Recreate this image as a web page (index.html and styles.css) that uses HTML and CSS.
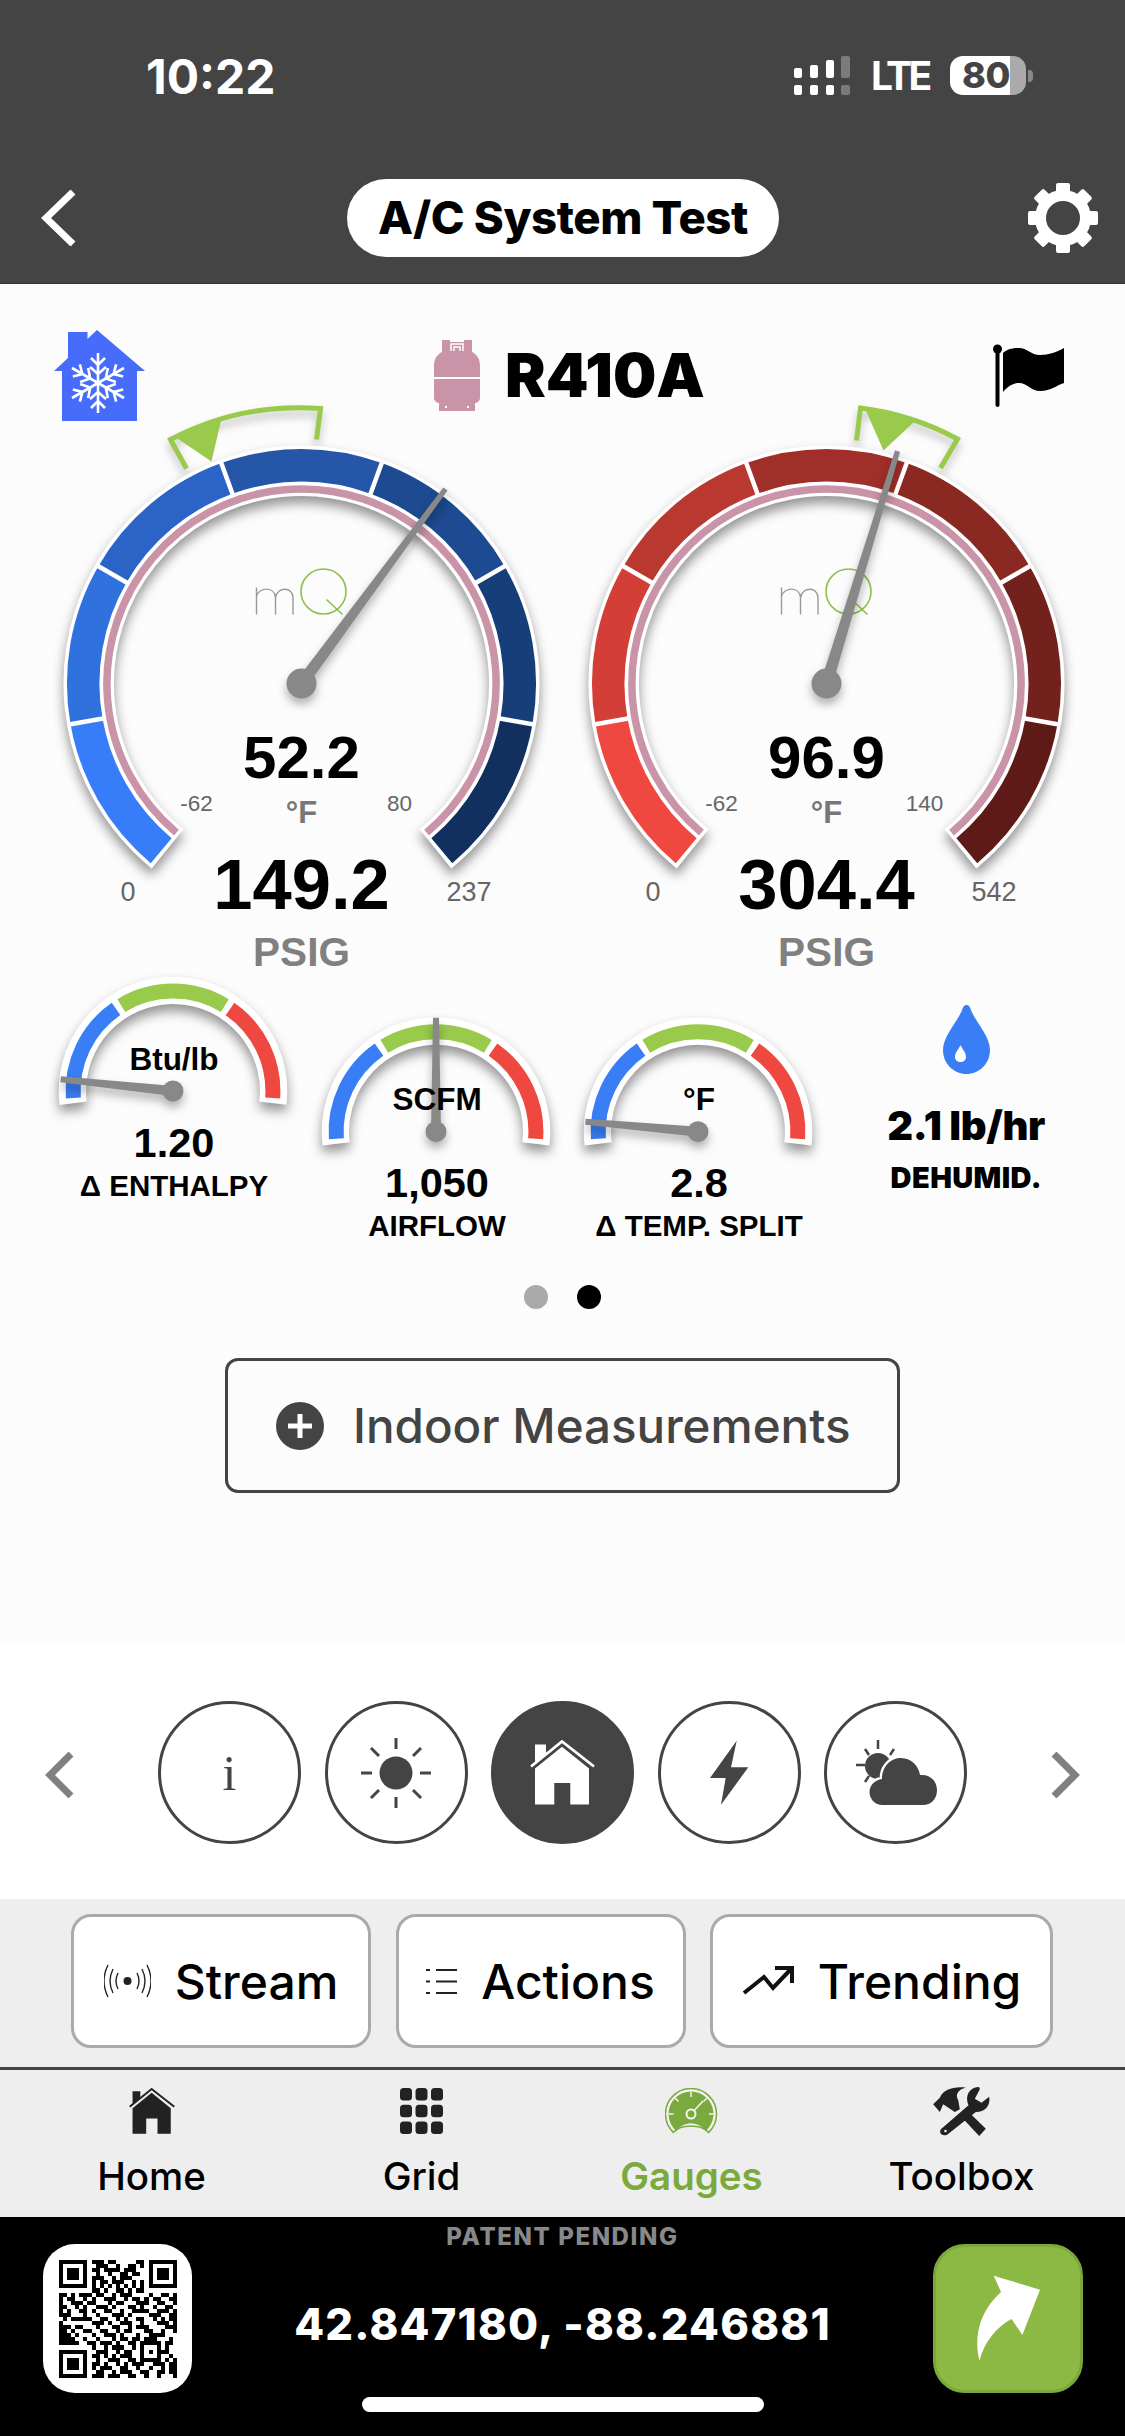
FILE: index.html
```html
<!DOCTYPE html>
<html lang="en">
<head>
<meta charset="utf-8">
<title>A/C System Test</title>
<link rel="stylesheet" href="styles.css">
</head>
<body>
<div class="screen">
  <header class="top">
    <div class="status">
      <span class="time">10:22</span>
      <div class="status-right">
        <svg class="signal" viewBox="0 0 56 39"><g fill="#fff"><rect x="0" y="12" width="8" height="10" rx="2"/><rect x="0" y="29" width="8" height="10" rx="2"/><rect x="16" y="9" width="8" height="13" rx="2"/><rect x="16" y="29" width="8" height="10" rx="2"/><rect x="32" y="4" width="8" height="18" rx="2"/><rect x="32" y="29" width="8" height="10" rx="2"/></g><g fill="#7b7b7b"><rect x="47" y="0" width="9" height="22" rx="2"/><rect x="47" y="29" width="9" height="10" rx="2"/></g></svg>
        <span class="lte">LTE</span>
        <span class="battery">80</span>
        <span class="nub"></span>
      </div>
    </div>
    <nav class="nav">
      <svg class="back" viewBox="0 0 36 56"><polyline points="32,2 5,28 32,54" fill="none" stroke="#fff" stroke-width="7"/></svg>
      <h1 class="title">A/C System Test</h1>
      <svg class="gear" viewBox="-35 -35 70 70"><circle r="22.5" fill="none" stroke="#fff" stroke-width="11"/><g fill="#fff"><rect x="-7" y="-35" width="14" height="12" rx="2"/><rect x="-7" y="-35" width="14" height="12" rx="2" transform="rotate(45)"/><rect x="-7" y="-35" width="14" height="12" rx="2" transform="rotate(90)"/><rect x="-7" y="-35" width="14" height="12" rx="2" transform="rotate(135)"/><rect x="-7" y="-35" width="14" height="12" rx="2" transform="rotate(180)"/><rect x="-7" y="-35" width="14" height="12" rx="2" transform="rotate(225)"/><rect x="-7" y="-35" width="14" height="12" rx="2" transform="rotate(270)"/><rect x="-7" y="-35" width="14" height="12" rx="2" transform="rotate(315)"/></g></svg>
    </nav>
  </header>

  <main class="content">
    <div class="heading">
      <svg class="house" viewBox="54 329 91 92">
        <path fill="#476bfb" d="M68 332H87.5V339L97 330L145 371H137V421H62V371H54L68 358Z"/>
        <g transform="translate(98 383)" fill="none" stroke="#fff" stroke-width="2.6">
          <g id="arm"><path d="M0 0V-30M-7 -25L0 -18L7 -25M-8 -16L0 -9L8 -16"/></g>
          <use href="#arm" transform="rotate(60)"/><use href="#arm" transform="rotate(120)"/><use href="#arm" transform="rotate(180)"/><use href="#arm" transform="rotate(240)"/><use href="#arm" transform="rotate(300)"/>
        </g>
      </svg>
      <div class="refrigerant">
        <svg class="cylinder" viewBox="0 0 46 71">
          <path fill="#c993a8" d="M8 0H16V2H30V0H38V12C42 14 46 18 46 26V58C46 60 44 63 41 63V71H5V63C2 63 0 60 0 58V26C0 18 4 14 8 12Z"/>
          <path fill="none" stroke="#fff" stroke-width="1.5" d="M17 11V4H29V11M20 11V7H26V11"/>
          <rect x="0" y="37" width="46" height="2" fill="#fff"/>
          <rect x="11" y="66" width="2" height="2" fill="#fff"/><rect x="33" y="66" width="2" height="2" fill="#fff"/>
        </svg>
        <span class="refrigerant-name">R410A</span>
      </div>
      <svg class="flag" viewBox="0 0 72 64">
        <rect x="2.5" y="4" width="4" height="60" rx="2"/><circle cx="4.5" cy="6" r="4.5"/>
        <path d="M10 10C14 6 20 5 26 5C34 5 38 12 47 12C56 12 64 9 71 5V40C64 42 58 48 47 48C38 48 34 40 26 40C20 40 14 44 10 49Z"/>
      </svg>
    </div>

    <div class="gauges">
      <svg class="gauge" viewBox="-262.5 -288.5 525 580">
        <path class="bracket" d="M15 -244L19 -275A277 277 0 0 0 -131 -244L-115 -215"/>
        <path class="bracket-mark" d="M-80 -265A277 277 0 0 0 -127 -247L-90 -222Z"/>
        <g class="shadow">
          <circle class="dial-base" r="212.8" pathLength="360" stroke-dasharray="282 78" transform="rotate(-231)"/>
          <circle class="seg" r="218.3" stroke="#377dfa" pathLength="360" stroke-dasharray="40 320" transform="rotate(-230)"/>
          <circle class="seg" r="218.3" stroke="#2f71dd" pathLength="360" stroke-dasharray="40 320" transform="rotate(-190)"/>
          <circle class="seg" r="218.3" stroke="#2b64c6" pathLength="360" stroke-dasharray="40 320" transform="rotate(-150)"/>
          <circle class="seg" r="218.3" stroke="#2556a7" pathLength="360" stroke-dasharray="40 320" transform="rotate(-110)"/>
          <circle class="seg" r="218.3" stroke="#1d4a90" pathLength="360" stroke-dasharray="40 320" transform="rotate(-70)"/>
          <circle class="seg" r="218.3" stroke="#163e78" pathLength="360" stroke-dasharray="40 320" transform="rotate(-30)"/>
          <circle class="seg" r="218.3" stroke="#12305f" pathLength="360" stroke-dasharray="40 320" transform="rotate(10)"/>
          <path class="dividers" d="M-68.4 -188L-80.7 -221.800M68.4 -188L80.7 -221.800M-173.200 -100L-204.400 -118M173.200 -100L204.400 -118M-197 34.700L-232.400 41M197 34.700L232.400 41"/>
          <circle class="rim" r="194.6" pathLength="360" stroke-dasharray="280 80" transform="rotate(-230)"/>
        </g>
        <path class="logo-m" d="M-45 -69V-96M-45 -87C-42 -97 -27 -97 -26 -86V-69M-26 -86C-24 -97 -9 -97 -8.5 -86V-69"/>
        <g class="logo-q"><circle cx="22" cy="-92" r="22.5"/><path d="M25 -84L41 -69"/></g>
        <g class="shadow-soft">
          <polygon class="needle" points="-6,0 6,0 2.6,-242 -2.6,-242" transform="rotate(36.5)"/>
          <circle class="needle" r="15"/>
        </g>
        <text class="g-value" y="94">52.2</text>
        <text class="g-unit" y="139">°F</text>
        <text class="g-small" x="-105" y="127">-62</text>
        <text class="g-small" x="98" y="127">80</text>
        <text class="g-main" y="225.6">149.2</text>
        <text class="g-end" x="-173.4" y="217.5">0</text>
        <text class="g-end" x="167.5" y="217.5">237</text>
        <text class="g-label" y="282">PSIG</text>
      </svg>
      <svg class="gauge" viewBox="-262.5 -288.5 525 580">
        <path class="bracket" d="M30 -243L34 -275.5A277 277 0 0 1 131 -244.5L114 -215.5"/>
        <path class="bracket-mark" d="M39 -274A277 277 0 0 1 88 -262L57 -233Z"/>
        <g class="shadow">
          <circle class="dial-base" r="212.8" pathLength="360" stroke-dasharray="282 78" transform="rotate(-231)"/>
          <circle class="seg" r="218.3" stroke="#ee4840" pathLength="360" stroke-dasharray="40 320" transform="rotate(-230)"/>
          <circle class="seg" r="218.3" stroke="#d33f36" pathLength="360" stroke-dasharray="40 320" transform="rotate(-190)"/>
          <circle class="seg" r="218.3" stroke="#b93830" pathLength="360" stroke-dasharray="40 320" transform="rotate(-150)"/>
          <circle class="seg" r="218.3" stroke="#a02f2a" pathLength="360" stroke-dasharray="40 320" transform="rotate(-110)"/>
          <circle class="seg" r="218.3" stroke="#8a2822" pathLength="360" stroke-dasharray="40 320" transform="rotate(-70)"/>
          <circle class="seg" r="218.3" stroke="#72211c" pathLength="360" stroke-dasharray="40 320" transform="rotate(-30)"/>
          <circle class="seg" r="218.3" stroke="#5e1a16" pathLength="360" stroke-dasharray="40 320" transform="rotate(10)"/>
          <path class="dividers" d="M-68.4 -188L-80.7 -221.800M68.4 -188L80.7 -221.800M-173.200 -100L-204.400 -118M173.200 -100L204.400 -118M-197 34.700L-232.400 41M197 34.700L232.400 41"/>
          <circle class="rim" r="194.6" pathLength="360" stroke-dasharray="280 80" transform="rotate(-230)"/>
        </g>
        <path class="logo-m" d="M-45 -69V-96M-45 -87C-42 -97 -27 -97 -26 -86V-69M-26 -86C-24 -97 -9 -97 -8.5 -86V-69"/>
        <g class="logo-q"><circle cx="22" cy="-92" r="22.5"/><path d="M25 -84L41 -69"/></g>
        <g class="shadow-soft">
          <polygon class="needle" points="-6,0 6,0 2.6,-243 -2.6,-243" transform="rotate(17)"/>
          <circle class="needle" r="15"/>
        </g>
        <text class="g-value" y="94">96.9</text>
        <text class="g-unit" y="139">°F</text>
        <text class="g-small" x="-105" y="127">-62</text>
        <text class="g-small" x="98" y="127">140</text>
        <text class="g-main" y="225.6">304.4</text>
        <text class="g-end" x="-173.4" y="217.5">0</text>
        <text class="g-end" x="167.5" y="217.5">542</text>
        <text class="g-label" y="282">PSIG</text>
      </svg>
    </div>

    <div class="minis">
      <svg class="mini" viewBox="-131 -116 262.5 275">
        <g class="shadow-mini">
          <circle class="mini-base" r="100.6" pathLength="360" stroke-dasharray="194 166" transform="rotate(-187)"/>
          <circle class="mini-seg" r="99.9" stroke="#3a7ef5" pathLength="360" stroke-dasharray="59.2 300.8" transform="rotate(-184)"/>
          <circle class="mini-seg" r="99.9" stroke="#9aca4c" pathLength="360" stroke-dasharray="62.4 297.6" transform="rotate(-121.2)"/>
          <circle class="mini-seg" r="99.9" stroke="#ee4840" pathLength="360" stroke-dasharray="59.2 300.8" transform="rotate(-55.2)"/>
        </g>
        <g class="shadow-soft">
          <polygon class="needle" points="-5,0 5,0 3,-113 -3,-113" transform="rotate(-84)"/>
          <circle class="needle" r="10.5"/>
        </g>
        <text class="m-unit" x="1" y="-21">Btu/lb</text>
        <text class="m-value" x="1" y="65.5">1.20</text>
        <text class="m-label" x="1" y="105">Δ ENTHALPY</text>
      </svg>
      <svg class="mini" viewBox="-131 -156.7 262.5 275">
        <g class="shadow-mini">
          <circle class="mini-base" r="100.6" pathLength="360" stroke-dasharray="194 166" transform="rotate(-187)"/>
          <circle class="mini-seg" r="99.9" stroke="#3a7ef5" pathLength="360" stroke-dasharray="59.2 300.8" transform="rotate(-184)"/>
          <circle class="mini-seg" r="99.9" stroke="#9aca4c" pathLength="360" stroke-dasharray="62.4 297.6" transform="rotate(-121.2)"/>
          <circle class="mini-seg" r="99.9" stroke="#ee4840" pathLength="360" stroke-dasharray="59.2 300.8" transform="rotate(-55.2)"/>
        </g>
        <g class="shadow-soft">
          <polygon class="needle" points="-5,0 5,0 3,-114 -3,-114"/>
          <circle class="needle" r="10.5"/>
        </g>
        <text class="m-unit" x="1" y="-21.7">SCFM</text>
        <text class="m-value" x="1" y="65">1,050</text>
        <text class="m-label" x="1" y="104.3">AIRFLOW</text>
      </svg>
      <svg class="mini" viewBox="-131 -156.7 262.5 275">
        <g class="shadow-mini">
          <circle class="mini-base" r="100.6" pathLength="360" stroke-dasharray="194 166" transform="rotate(-187)"/>
          <circle class="mini-seg" r="99.9" stroke="#3a7ef5" pathLength="360" stroke-dasharray="59.2 300.8" transform="rotate(-184)"/>
          <circle class="mini-seg" r="99.9" stroke="#9aca4c" pathLength="360" stroke-dasharray="62.4 297.6" transform="rotate(-121.2)"/>
          <circle class="mini-seg" r="99.9" stroke="#ee4840" pathLength="360" stroke-dasharray="59.2 300.8" transform="rotate(-55.2)"/>
        </g>
        <g class="shadow-soft">
          <polygon class="needle" points="-5,0 5,0 3,-113 -3,-113" transform="rotate(-85)"/>
          <circle class="needle" r="10.5"/>
        </g>
        <text class="m-unit" x="1" y="-21.7">°F</text>
        <text class="m-value" x="1" y="65">2.8</text>
        <text class="m-label" x="1" y="104.3">Δ TEMP. SPLIT</text>
      </svg>
      <div class="dehumid">
        <svg class="drop" viewBox="0 0 47 69"><path fill="#3a7ef5" d="M23.5 0C26 0 27 2 28 5C32 16 47 31 47 45C47 59 36 69 23.5 69C11 69 0 59 0 45C0 31 15 16 19 5C20 2 21 0 23.5 0Z"/><path fill="#fff" d="M17.5 40C19 44 23 47 23 52C23 55 20.500 57 17.500 57C14.500 57 12 55 12 52C12 47 16 44 17.500 40Z"/></svg>
        <span class="dehumid-value">2.1 lb/hr</span>
        <span class="dehumid-label">DEHUMID.</span>
      </div>
    </div>

    <div class="pager"><span class="dot"></span><span class="dot dot-on"></span></div>

    <button class="indoor" type="button">
      <svg class="plus" viewBox="0 0 48 48"><circle cx="24" cy="24" r="24" fill="#444"/><path d="M24 12V36M12 24H36" stroke="#fff" stroke-width="5"/></svg>
      <span>Indoor Measurements</span>
    </button>
  </main>

  <section class="carousel">
    <svg class="chev" viewBox="0 0 29 46"><polyline points="26,2 5,23 26,44" fill="none" stroke="#808080" stroke-width="7"/></svg>
    <div class="round"><span class="info">i</span></div>
    <div class="round">
      <svg class="ico-sun" viewBox="-36 -36 72 72"><circle r="16.500" fill="#444"/><path d="M0 -24V-35M0 24V35M-24 0H-35M24 0H35M-17 -17L-25 -25M17 -17L25 -25M-17 17L-25 25M17 17L25 25" stroke="#444" stroke-width="3"/></svg>
    </div>
    <div class="round round-on">
      <svg class="ico-home" viewBox="0 0 65 65"><path fill="#fff" d="M5 28.500L32 6.800L59 28.500V64.500H40.300V43H24.300V64.500H5Z"/><path fill="#fff" d="M5 4.500H16V14L5 23Z"/><polyline points="1,26.500 32,1.500 64,26.500" fill="none" stroke="#fff" stroke-width="2.800"/></svg>
    </div>
    <div class="round">
      <svg class="ico-bolt" viewBox="0 0 39 65"><polygon fill="#444" points="26.700,0.700 0,38 15.700,38 11,64.700 38.300,27.300 21,27.300"/></svg>
    </div>
    <div class="round">
      <svg class="ico-cloud" viewBox="853 1740 84 67"><circle cx="877" cy="1767" r="13" fill="#444"/><path d="M877 1741V1750M855 1766H864M864 1750L868 1756M893 1750L889 1756M864 1783L868 1777" stroke="#444" stroke-width="2.500"/><path fill="#444" stroke="#fff" stroke-width="5" paint-order="stroke" d="M882 1806C872 1806 868.500 1798 868.500 1793C868.500 1786 874 1781 881 1780C881 1767 890 1759 900 1759C911 1759 918 1768 919 1776C929 1775 936 1782 936 1791C936 1800 930 1806 922 1806Z"/></svg>
    </div>
    <svg class="chev" viewBox="0 0 29 46"><polyline points="3,2 24,23 3,44" fill="none" stroke="#808080" stroke-width="7"/></svg>
  </section>

  <section class="actions">
    <button class="action action-stream" type="button">
      <svg class="ico-stream" viewBox="0 0 47 34"><circle cx="23.500" cy="17" r="4" fill="#222"/><path d="M33 9Q37 17 33 25M38 5Q44 17 38 29M43 1Q51 17 43 33M14 9Q10 17 14 25M9 5Q3 17 9 29M4 1Q-4 17 4 33" fill="none" stroke="#222" stroke-width="1.400"/></svg>
      <span>Stream</span>
    </button>
    <button class="action action-list" type="button">
      <svg class="ico-list" viewBox="0 0 31 27"><path d="M0 2H4M10 2H31M0 13.500H4M10 13.500H31M0 25H4M10 25H31" stroke="#222" stroke-width="2"/></svg>
      <span>Actions</span>
    </button>
    <button class="action action-trend" type="button">
      <svg class="ico-trend" viewBox="0 0 52 30"><path d="M2 27L22 11L31 22L49 3M33 2H50V17" fill="none" stroke="#111" stroke-width="4"/></svg>
      <span>Trending</span>
    </button>
  </section>

  <nav class="tabs">
    <div class="tab">
      <span class="tab-icon"><svg class="tab-home" viewBox="0 0 65 65"><path fill="#222" d="M5 28.500L32 6.800L59 28.500V64.500H40.300V43H24.300V64.500H5Z"/><path fill="#222" d="M5 4.500H16V14L5 23Z"/><polyline points="1,26.500 32,1.500 64,26.500" fill="none" stroke="#222" stroke-width="2.800"/></svg></span>
      <span class="tab-label">Home</span>
    </div>
    <div class="tab">
      <span class="tab-icon"><svg class="tab-grid" viewBox="0 0 43 46"><g fill="#222"><rect width="12" height="12.500" rx="3.500"/><rect x="15.500" width="12" height="12.500" rx="3.500"/><rect x="31" width="12" height="12.500" rx="3.500"/><rect y="16.700" width="12" height="12.500" rx="3.500"/><rect x="15.500" y="16.700" width="12" height="12.500" rx="3.500"/><rect x="31" y="16.700" width="12" height="12.500" rx="3.500"/><rect y="33.500" width="12" height="12.500" rx="3.500"/><rect x="15.500" y="33.500" width="12" height="12.500" rx="3.500"/><rect x="31" y="33.500" width="12" height="12.500" rx="3.500"/></g></svg></span>
      <span class="tab-label">Grid</span>
    </div>
    <div class="tab">
      <span class="tab-icon"><svg class="tab-gauge" viewBox="0 0 53 46"><path fill="#f4f4f4" stroke="#7aaa3e" stroke-width="1.500" d="M8.300 44.400A25.500 25.500 0 1 1 43.700 44.400C36 36 16 36 8.300 44.400Z"/><path fill="#7aaa3e" d="M11.500 43.200A22.500 22.500 0 1 1 40.500 43.200C34 33 18 33 11.500 43.200Z"/><path d="M26 4V9M10 10L13.500 13.500M42 10L38.500 13.500M3.500 26H8.500M44 26H48.500M26 26L38 13" fill="none" stroke="#f4f4f4" stroke-width="1.500"/><circle cx="26" cy="26" r="4.500" fill="#7aaa3e" stroke="#f4f4f4" stroke-width="2"/></svg></span>
      <span class="tab-label tab-label-on">Gauges</span>
    </div>
    <div class="tab">
      <span class="tab-icon"><svg class="tab-tool" viewBox="880 30 170 150"><g fill="#222"><path d="M960 118L978 100L1038 158L1018 180Z"/><path d="M880 85L900 65C910 40 945 30 978 35C955 40 945 55 955 72L960 100L945 108L910 85L900 108Z"/><path d="M1018 33C985 33 975 65 986 88L903 160C896 172 908 182 922 176L1008 108C1040 108 1052 85 1048 62L1025 80L1005 68L1020 40Z"/></g><circle cx="917" cy="165" r="4" fill="#eee"/></svg></span>
      <span class="tab-label">Toolbox</span>
    </div>
  </nav>

  <footer class="foot">
    <div class="patent">PATENT PENDING</div>
    <div class="foot-row">
      <div class="qr">
        <svg class="qr-code" viewBox="0 0 29 29" shape-rendering="crispEdges"><path fill="none" stroke="#000" stroke-width="1" d="M0 .5h7M8 .5h3M12 .5h2M19 .5h2M22 .5h7M0 1.500h1M6 1.500h1M9 1.500h3M14 1.500h1M17 1.500h2M20 1.500h1M22 1.500h1M28 1.500h1M0 2.500h1M2 2.500h3M6 2.500h1M8 2.500h2M11 2.500h4M16 2.500h3M22 2.500h1M24 2.500h3M28 2.500h1M0 3.500h1M2 3.500h3M6 3.500h1M9 3.500h1M12 3.500h1M15 3.500h2M18 3.500h2M22 3.500h1M24 3.500h3M28 3.500h1M0 4.500h1M2 4.500h3M6 4.500h1M8 4.500h3M13 4.500h1M15 4.500h3M22 4.500h1M24 4.500h3M28 4.500h1M0 5.500h1M6 5.500h1M8 5.500h1M10 5.500h2M13 5.500h3M18 5.500h1M20 5.500h1M22 5.500h1M28 5.500h1M0 6.500h7M8 6.500h1M10 6.500h1M12 6.500h1M14 6.500h1M16 6.500h1M18 6.500h1M20 6.500h1M22 6.500h7M8 7.500h2M11 7.500h1M14 7.500h2M17 7.500h1M19 7.500h2M0 8.500h2M3 8.500h1M5 8.500h3M9 8.500h2M13 8.500h1M15 8.500h3M22 8.500h1M25 8.500h2M28 8.500h1M0 9.500h1M2 9.500h2M6 9.500h1M8 9.500h1M11 9.500h3M16 9.500h1M18 9.500h2M21 9.500h1M23 9.500h2M27 9.500h2M0 10.500h1M3 10.500h3M7 10.500h2M12 10.500h1M14 10.500h2M19 10.500h3M24 10.500h2M28 10.500h1M0 11.500h2M4 11.500h1M6 11.500h1M9 11.500h3M13 11.500h1M17 11.500h2M20 11.500h1M23 11.500h1M26 11.500h2M0 12.500h1M2 12.500h1M5 12.500h2M8 12.500h1M11 12.500h2M15 12.500h1M18 12.500h4M24 12.500h3M28 12.500h1M0 13.500h3M6 13.500h1M9 13.500h1M13 13.500h3M17 13.500h1M22 13.500h3M27 13.500h2M1 14.500h1M3 14.500h5M10 14.500h2M14 14.500h1M16 14.500h1M19 14.500h2M23 14.500h1M25 14.500h1M27 14.500h2M0 15.500h1M8 15.500h3M12 15.500h1M15 15.500h3M20 15.500h1M24 15.500h3M28 15.500h1M0 16.500h3M4 16.500h2M9 16.500h1M13 16.500h2M17 16.500h1M19 16.500h3M26 16.500h3M0 17.500h2M3 17.500h1M6 17.500h2M10 17.500h2M14 17.500h1M16 17.500h2M21 17.500h2M25 17.500h1M28 17.500h1M0 18.500h3M4 18.500h1M8 18.500h1M11 18.500h3M15 18.500h1M19 18.500h1M22 18.500h4M0 19.500h4M6 19.500h1M9 19.500h1M13 19.500h1M15 19.500h2M18 19.500h2M21 19.500h3M27 19.500h1M0 20.500h5M7 20.500h2M10 20.500h3M14 20.500h1M17 20.500h2M20 20.500h5M26 20.500h2M8 21.500h1M11 21.500h1M13 21.500h3M18 21.500h1M20 21.500h1M24 21.500h1M26 21.500h1M0 22.500h7M9 22.500h3M14 22.500h1M16 22.500h2M20 22.500h1M22 22.500h1M24 22.500h3M0 23.500h1M6 23.500h1M8 23.500h2M11 23.500h1M13 23.500h1M15 23.500h3M20 23.500h1M24 23.500h1M27 23.500h1M0 24.500h1M2 24.500h3M6 24.500h1M9 24.500h1M12 24.500h3M17 24.500h2M20 24.500h5M26 24.500h1M28 24.500h1M0 25.500h1M2 25.500h3M6 25.500h1M8 25.500h2M11 25.500h1M14 25.500h1M16 25.500h1M18 25.500h3M23 25.500h3M27 25.500h2M0 26.500h1M2 26.500h3M6 26.500h1M8 26.500h1M10 26.500h3M15 26.500h2M19 26.500h1M22 26.500h1M25 26.500h1M27 26.500h2M0 27.500h1M6 27.500h1M9 27.500h2M13 27.500h1M15 27.500h3M20 27.500h2M24 27.500h2M27 27.500h2M0 28.500h7M8 28.500h3M12 28.500h3M17 28.500h2M21 28.500h1M24 28.500h1M28 28.500h1"/></svg>
      </div>
      <div class="coords">42.847180, -88.246881</div>
      <div class="share">
        <svg class="share-arrow" viewBox="45 28 75 95"><path fill="#fff" d="M67.700 32.700L114 46.700L96.400 92L85.600 76C70 84 58 100 53.400 117.700C48 95 52 70 75 49Z"/></svg>
      </div>
    </div>
    <div class="home-bar"></div>
  </footer>
</div>
</body>
</html>
```

FILE: styles.css
```css
* { box-sizing: border-box; }
html, body { margin: 0; padding: 0; background: #000; }
.screen {
  width: 1125px; height: 2436px; display: flex; flex-direction: column; overflow: hidden;
  font-family: Inter, "Liberation Sans", sans-serif; color: #000;
}

/* Header */
.top { flex: none; height: 284px; background: #444; padding-top: 56px; border-bottom: 1px solid #333; }
.status { display: flex; align-items: center; height: 39px; padding: 0 92px 0 146px; }
.time { color: #fff; font-size: 48px; font-weight: 700; line-height: 39px; padding-top: 2px; }
.status-right { margin-left: auto; display: flex; align-items: center; }
.signal { width: 56px; height: 39px; }
.lte { width: 56px; margin-left: 21px; color: #fff; font-size: 39px; font-weight: 700; letter-spacing: -3.5px; line-height: 39px; }
.battery {
  width: 76px; height: 39px; margin-left: 23px; border-radius: 13px; padding-left: 12px;
  background: linear-gradient(90deg, #fff 79%, #aaa 79%);
  color: #444; font-size: 36px; font-weight: 800; line-height: 39px; letter-spacing: -0.5px;
}
.nub { width: 5px; height: 12px; margin-left: 2px; border-radius: 0 4px 4px 0; background: #888; }
.nav { display: flex; align-items: center; height: 78px; margin-top: 84px; padding: 0 27px 0 41px; justify-content: space-between; }
.back { width: 36px; height: 56px; }
.title {
  margin: 0 0 0 21px; width: 432px; height: 78px; border-radius: 39px; background: #fff;
  font-size: 45.5px; font-weight: 800; line-height: 78px; text-align: center; letter-spacing: -0.4px;
}
.gear { width: 70px; height: 70px; }

/* Content */
.content { flex: none; height: 1360px; background: #fcfcfc; display: flex; flex-direction: column; padding-top: 45px; }
.heading { display: flex; justify-content: space-between; align-items: center; height: 92px; padding: 0 60px 0 54px; }
.house { width: 91px; height: 92px; }
.refrigerant { display: flex; align-items: center; gap: 25px; width: 270px; }
.cylinder { width: 46px; height: 71px; flex: none; }
.refrigerant-name { font-size: 61px; font-weight: 900; line-height: 60px; }
.flag { width: 72px; height: 64px; }

.gauges { display: flex; margin-top: -26px; padding-left: 39px; }
.gauge { width: 525px; height: 580px; overflow: visible; font-family: "Liberation Sans", Arial, sans-serif; }
.shadow { filter: drop-shadow(0 7px 6px rgba(0,0,0,.42)); }
.shadow-soft { filter: drop-shadow(0 6px 5px rgba(0,0,0,.3)); }
.shadow-mini { filter: drop-shadow(0 7px 6px rgba(0,0,0,.42)); }
.dial-base { fill: none; stroke: #fff; stroke-width: 50.5; }
.seg { fill: none; stroke-width: 32.5; }
.dividers { fill: none; stroke: #fff; stroke-width: 4.5; }
.rim { fill: none; stroke: #c993a8; stroke-width: 7.5; }
.bracket { fill: none; stroke: #9aca4c; stroke-width: 5; filter: drop-shadow(0 6px 4px rgba(0,0,0,.25)); }
.bracket-mark { fill: #9aca4c; }
.logo-m { fill: none; stroke: #999; stroke-width: 1.4; }
.logo-q { fill: none; stroke: #8cc04a; stroke-width: 1.6; }
.needle { fill: #888; }
.gauge text, .mini text { text-anchor: middle; }
.g-value { font-size: 60px; font-weight: 700; fill: #000; }
.g-unit { font-size: 31px; font-weight: 700; fill: #777; }
.g-small { font-size: 22.5px; fill: #666; }
.g-main { font-size: 70.5px; font-weight: 700; fill: #000; }
.g-end { font-size: 27px; fill: #666; }
.g-label { font-size: 40.5px; font-weight: 700; fill: #808080; }

.minis { display: flex; padding-left: 42px; }
.mini { flex: none; width: 262.5px; height: 275px; overflow: visible; font-family: "Liberation Sans", Arial, sans-serif; }
.mini-base { fill: none; stroke: #fff; stroke-width: 27.3; }
.mini-seg { fill: none; stroke-width: 15; }
.m-unit { font-size: 31.5px; font-weight: 700; fill: #000; }
.m-value { font-size: 41.5px; font-weight: 700; fill: #000; }
.m-label { font-size: 29.5px; font-weight: 700; fill: #000; }
.dehumid { flex: none; width: 262.5px; display: flex; flex-direction: column; align-items: center; padding: 30px 0 0 11px; }
.drop { width: 47px; height: 69px; }
.dehumid-value { margin-top: 29px; font-size: 40px; font-weight: 900; line-height: 46px; letter-spacing: -0.3px; white-space: nowrap; }
.dehumid-label { margin-top: 12px; font-size: 29px; font-weight: 900; line-height: 34px; letter-spacing: 0.4px; }

.pager { display: flex; justify-content: center; gap: 29px; margin-top: 35px; }
.dot { width: 24px; height: 24px; border-radius: 50%; background: #aaa; }
.dot-on { background: #000; }

.indoor {
  align-self: center; width: 675px; height: 135px; margin-top: 49px; padding: 0 0 0 48px;
  display: flex; align-items: center; gap: 29px;
  background: #fcfcfc; border: 3px solid #444; border-radius: 13px;
  font-family: inherit; font-size: 47.5px; font-weight: 500; color: #444; white-space: nowrap;
}
.plus { width: 48px; height: 48px; flex: none; }

/* Carousel */
.carousel { flex: none; height: 255px; background: #fff; display: flex; align-items: center; justify-content: center; gap: 23.5px; padding-top: 2px; }
.chev { width: 29px; height: 46px; flex: none; margin: 4px 61px 0 60px; }
.round { flex: none; width: 143px; height: 143px; border: 3px solid #444; border-radius: 50%; display: flex; align-items: center; justify-content: center; background: #fff; }
.round-on { background: #444; }
.info { font-family: "Liberation Serif", serif; font-size: 50px; color: #444; line-height: 1; }
.ico-sun { width: 72px; height: 72px; }
.ico-home { width: 65px; height: 65px; }
.ico-bolt { width: 39px; height: 65px; }
.ico-cloud { width: 84px; height: 67px; }

/* Action row */
.actions { flex: none; height: 168px; background: #eee; padding: 15px 0 0 71px; display: flex; gap: 24.5px; align-items: flex-start; }
.action {
  height: 134px; display: flex; align-items: center; justify-content: center; gap: 24px; padding: 0;
  background: #fff; border: 3px solid #aaa; border-radius: 20px;
  font-family: inherit; font-size: 48px; font-weight: 500; color: #000;
}
.action-stream { width: 300px; }
.action-list { width: 290px; }
.action-trend { width: 343px; }
.ico-stream { width: 47px; height: 34px; }
.ico-list { width: 31px; height: 27px; }
.ico-trend { width: 52px; height: 30px; }

/* Tabs */
.tabs { flex: none; height: 150px; background: #eee; border-top: 3px solid #444; display: flex; padding: 16px 22.5px 0 16.5px; }
.tab { width: 270px; display: flex; flex-direction: column; align-items: center; }
.tab-icon { height: 50px; display: flex; align-items: center; justify-content: center; }
.tab-home { width: 46px; height: 46px; }
.tab-grid { width: 43px; height: 46px; }
.tab-gauge { width: 53px; height: 46px; }
.tab-tool { width: 57px; height: 50px; }
.tab-label { margin-top: 18px; font-size: 38.5px; font-weight: 500; line-height: 44px; }
.tab-label-on { color: #7aaa3e; font-weight: 600; }

/* Footer */
.foot { flex: none; height: 219px; background: #000; display: flex; flex-direction: column; }
.patent { height: 27px; padding-top: 8px; text-align: center; color: #888; font-size: 24px; font-weight: 800; line-height: 24px; letter-spacing: 1.6px; }
.foot-row { display: flex; align-items: center; justify-content: space-between; height: 149px; padding: 0 42px 0 43px; }
.qr { width: 149px; height: 149px; border-radius: 32px; background: #fff; display: flex; align-items: center; justify-content: center; }
.qr-code { width: 118px; height: 118px; }
.coords { color: #fff; font-size: 43.5px; font-weight: 800; letter-spacing: 1.2px; white-space: nowrap; padding-top: 10px; }
.share { width: 150px; height: 149px; border-radius: 32px; background: #8cb944; border: 3px solid #7aa83c; display: flex; align-items: center; justify-content: center; }
.share-arrow { width: 75px; height: 95px; }
.home-bar { width: 402px; height: 15px; margin: 4px auto 0; border-radius: 8px; background: #fff; }
```
